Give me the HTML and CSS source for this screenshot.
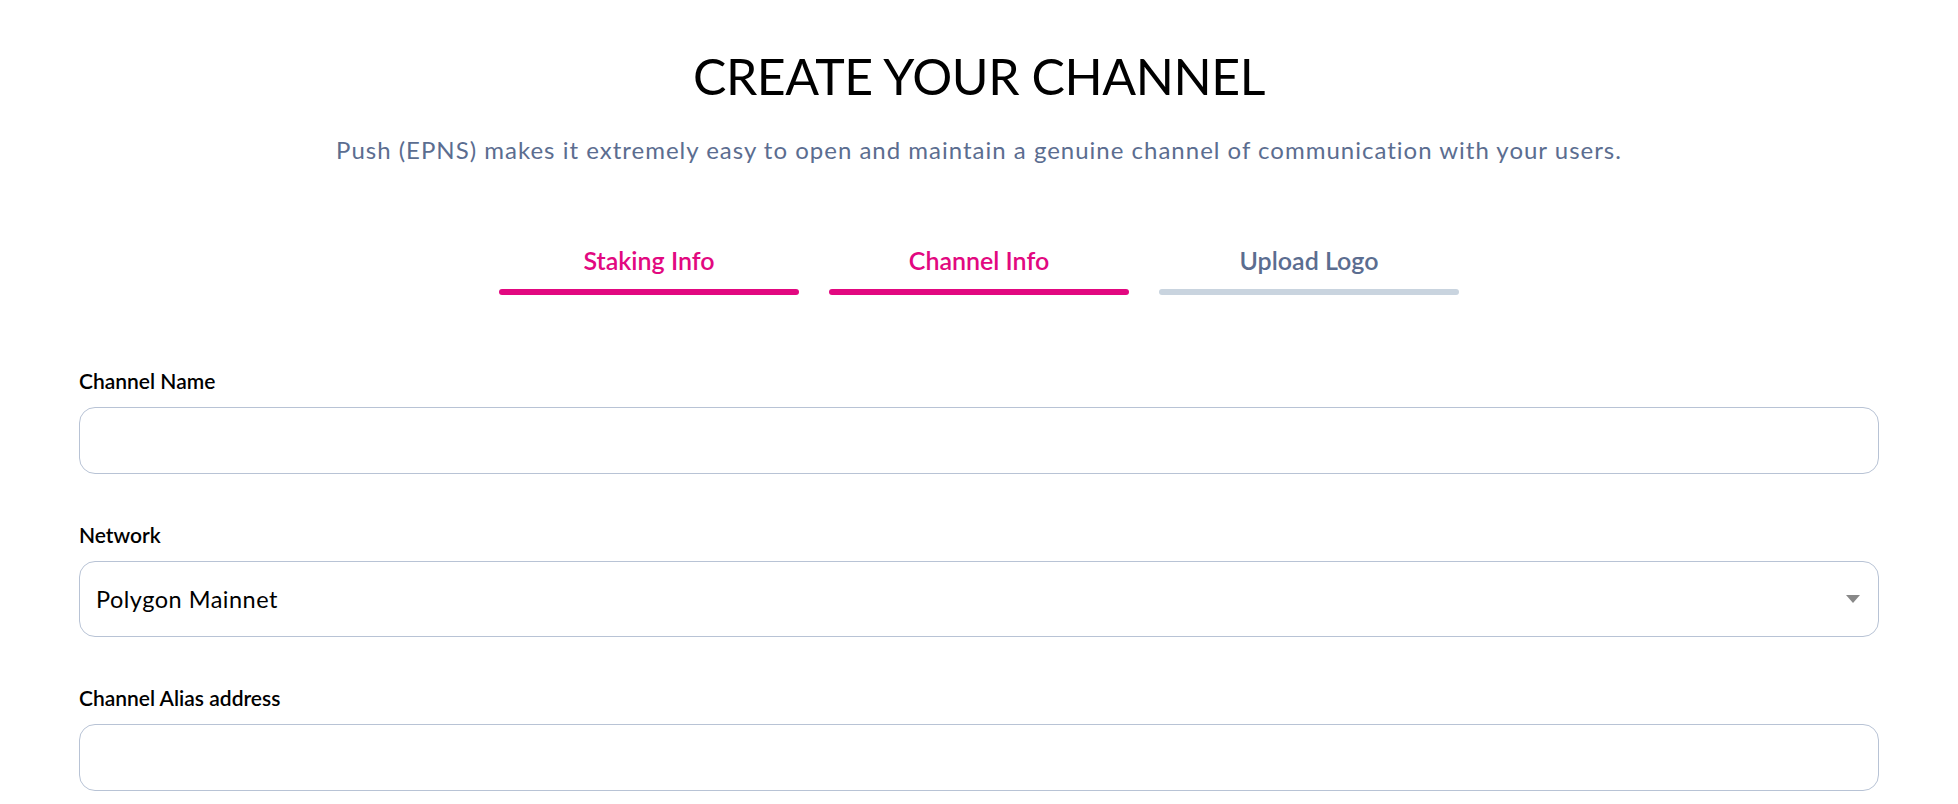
FILE: index.html
```html
<!DOCTYPE html>
<html lang="en">
<head>
<meta charset="utf-8">
<title>Create Your Channel</title>
<link rel="stylesheet" href="styles.css">
</head>
<body>
<main class="page">
  <header class="head">
    <h1 class="title">CREATE YOUR CHANNEL</h1>
    <p class="subtitle">Push (EPNS) makes it extremely easy to open and maintain a genuine channel of communication with your users.</p>
  </header>
  <nav class="steps">
    <div class="step done"><span class="step-label">Staking Info</span><span class="step-bar"></span></div>
    <div class="step done"><span class="step-label">Channel Info</span><span class="step-bar"></span></div>
    <div class="step"><span class="step-label">Upload Logo</span><span class="step-bar"></span></div>
  </nav>
  <form class="form">
    <div class="field">
      <label class="label" for="cname">Channel Name</label>
      <input class="input" id="cname" type="text">
    </div>
    <div class="field">
      <label class="label" for="net">Network</label>
      <div class="select">
        <span class="select-value">Polygon Mainnet</span>
        <svg class="caret" width="14" height="8" viewBox="0 0 14 8"><path d="M0 0 H14 L7 8 Z" fill="#888"/></svg>
      </div>
    </div>
    <div class="field">
      <label class="label" for="alias">Channel Alias address</label>
      <input class="input" id="alias" type="text">
    </div>
  </form>
</main>
</body>
</html>
```
FILE: styles.css
```css
html, body {
  margin: 0;
  padding: 0;
  background: #ffffff;
}
body {
  font-family: "Lato", "Noto Sans", sans-serif;
  color: #000;
  overflow: hidden;
}
.page {
  width: 1800px;
  margin: 0 auto;
  padding-top: 50px;
}
.head {
  text-align: center;
}
.title {
  margin: 0;
  font-size: 50px;
  line-height: 52px;
  font-weight: 400;
  letter-spacing: -0.4px;
  color: #000;
}
.subtitle {
  margin: 33px 0 0;
  font-size: 24px;
  line-height: 30px;
  letter-spacing: 1px;
  color: #5b6d90;
}
.steps {
  display: flex;
  justify-content: center;
  gap: 30px;
  margin-top: 80px;
}
.step {
  width: 300px;
  display: flex;
  flex-direction: column;
  align-items: center;
}
.step-label {
  font-size: 25px;
  line-height: 30px;
  font-weight: 600;
  color: #5b6d90;
}
.step-bar {
  margin-top: 14px;
  width: 100%;
  height: 6px;
  border-radius: 4px;
  background: #c9d4df;
}
.step.done .step-label { color: #e20880; }
.step.done .step-bar { background: #e20880; }
.form {
  margin-top: 73px;
  display: flex;
  flex-direction: column;
  gap: 48px;
}
.field {
  display: flex;
  flex-direction: column;
}
.label {
  font-size: 21px;
  line-height: 26px;
  font-weight: 600;
  color: #000;
  margin-bottom: 13px;
}
.input {
  box-sizing: border-box;
  height: 67px;
  border: 1px solid #b8c3d5;
  border-radius: 16px;
  padding: 0 16px;
  font: inherit;
  outline: none;
}
.select {
  box-sizing: border-box;
  height: 76px;
  border: 1px solid #b8c3d5;
  border-radius: 16px;
  padding: 0 16px 0 16px;
  display: flex;
  align-items: center;
  justify-content: space-between;
}
.select-value {
  font-size: 23.5px;
  letter-spacing: 0.5px;
  color: #000;
}
.caret {
  display: block;
  margin-right: 2px;
}
```
